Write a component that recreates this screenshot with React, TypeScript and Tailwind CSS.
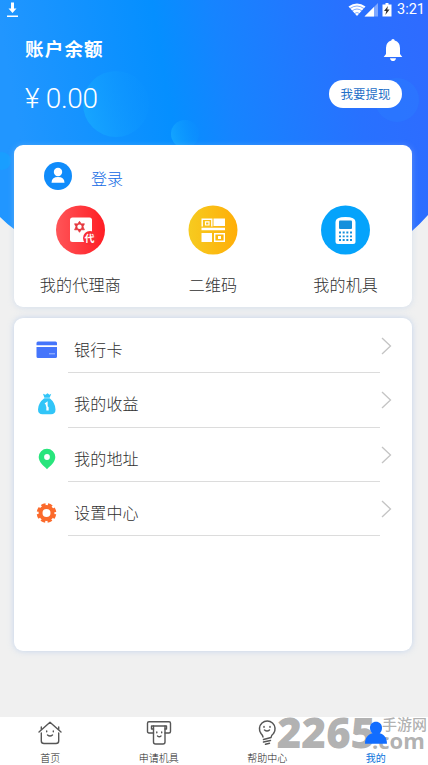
import React from 'react';

const services = [
  { label: '我的代理商', icon: <AgentIcon /> },
  { label: '二维码', icon: <QrIcon /> },
  { label: '我的机具', icon: <TerminalIcon /> },
];

const menuItems = [
  { label: '银行卡', icon: <CardIcon /> },
  { label: '我的收益', icon: <MoneyBagIcon /> },
  { label: '我的地址', icon: <PinIcon /> },
  { label: '设置中心', icon: <GearIcon /> },
];

const tabs = [
  { label: '首页', icon: <HomeIcon />, active: false },
  { label: '申请机具', icon: <ApplyIcon />, active: false },
  { label: '帮助中心', icon: <BulbIcon />, active: false },
  { label: '我的', icon: <MineIcon />, active: true },
];

function HeaderBackdrop() {
  return (
    <svg className="absolute left-0 top-0 h-[260px] w-[428px]" viewBox="0 0 428 260">
      <defs>
        <linearGradient id="sky" x1="0" y1="0.1" x2="1" y2="0">
          <stop offset="0" stopColor="#2196ff" />
          <stop offset="0.36" stopColor="#058fff" />
          <stop offset="0.5" stopColor="#1684ff" />
          <stop offset="0.8" stopColor="#2871ff" />
          <stop offset="1" stopColor="#2f6bff" />
        </linearGradient>
        <linearGradient id="bubble" x1="0" y1="0.6" x2="1" y2="0.3">
          <stop offset="0" stopColor="#17abff" stopOpacity="0.75" />
          <stop offset="1" stopColor="#0c96ff" stopOpacity="0.1" />
        </linearGradient>
      </defs>
      <path d="M0 0H428V215Q420 224 412 231L380 252H40L14 229Q7 224 0 217Z" fill="url(#sky)" />
      <circle cx="116" cy="104" r="33" fill="url(#bubble)" />
      <circle cx="185" cy="134" r="14" fill="url(#bubble)" />
      <circle cx="2" cy="161" r="9" fill="#12a5ff" opacity="0.5" />
      <circle cx="397" cy="100" r="22" fill="#2b80ff" opacity="0.4" />
    </svg>
  );
}

function StatusBar() {
  return (
    <div className="flex h-5 items-center justify-between pl-[6px] pr-[3px] text-white">
      <svg className="h-[16px] w-[13px]" viewBox="0 0 13 16" fill="currentColor">
        <path d="M5 .5h3v6h2.500L6.500 11 2.500 6.500H5zM1 13.500h11V15H1z" />
      </svg>
      <div className="flex items-center">
        <svg className="h-[16px] w-[46px]" viewBox="0 0 46 16" fill="currentColor">
          <path d="M2.500 4.500Q11 -1.500 19.500 4.500L11 14Z" />
          <path d="M4 6.500Q11 1.500 18 6.500M6 9Q11 5 16 9M8.500 11.500Q11 9.500 13.500 11.500" fill="none" stroke="#2b74ff" strokeWidth=".6" />
          <path d="M32 1v13.500H18.500z" opacity=".4" />
          <path d="M28 5v9.500h-9.500z" />
          <path d="M36.500 2.500h3V1h3v1.500h3v12h-9z" />
          <path d="M42 4l-4 5h2.300l-1 4 4.300-5.500H41.200z" fill="#333" />
        </svg>
        <span className="ml-[5px] font-[Roboto] text-[14.500px] leading-5">3:21</span>
      </div>
    </div>
  );
}

function AgentIcon() {
  return (
    <svg className="size-[50px]" viewBox="0 0 50 50">
      <defs>
        <linearGradient id="red">
          <stop offset="0" stopColor="#ff5558" />
          <stop offset="1" stopColor="#ff1d24" />
        </linearGradient>
      </defs>
      <circle cx="25.500" cy="25" r="24.500" fill="url(#red)" />
      <rect x="15" y="12.500" width="22" height="24.500" rx="2.500" fill="#fff" />
      <path d="M24.500 16.300l1.700 2.600 3.200-.1-1.400 3 1.400 3-3.200-.1-1.700 2.600-1.700-2.600-3.200.1 1.400-3-1.400-3 3.200.1z" fill="#e5393f" stroke="#e5393f" strokeWidth=".8" strokeLinejoin="round" />
      <circle cx="24.500" cy="21.800" r="2.200" fill="#fff" />
      <circle cx="35" cy="33" r="7" fill="#f92d34" />
      <text x="34.500" y="36.800" textAnchor="middle" fontSize="10" fontWeight="700" fill="#fff">代</text>
    </svg>
  );
}

function QrIcon() {
  return (
    <svg className="size-[50px]" viewBox="0 0 50 50">
      <defs>
        <linearGradient id="amber">
          <stop offset="0" stopColor="#f6cb20" />
          <stop offset="1" stopColor="#ffae08" />
        </linearGradient>
      </defs>
      <circle cx="25" cy="25" r="24.500" fill="url(#amber)" />
      <path d="M14.200 21.500v-7.300h9.600v7.300M26.700 28.700h9.600v7.600h-9.600z" fill="none" stroke="#fff" strokeWidth="1.400" />
      <path d="M17.500 16.800h3.500v3.200h-3.500z" fill="none" stroke="#fff" strokeWidth="1.200" />
      <path d="M25.500 13.500H37v7.500H25.500zM13.500 22.800H37v2.400H13.500zM13.500 28H24v9H13.500zM30 31h3v3h-3z" fill="#fff" />
    </svg>
  );
}

function TerminalIcon() {
  return (
    <svg className="size-[50px]" viewBox="0 0 50 50">
      <circle cx="24.500" cy="25" r="24.500" fill="#05a3fb" />
      <path d="M14.500 17Q14.500 12 24.500 12T34.500 17V36.500Q34.500 39 32 39H17Q14.500 39 14.500 36.500Z" fill="#fff" />
      <rect x="18" y="15.500" width="13" height="8.500" rx="1" fill="#1590dc" />
      <path d="M18 27.500h13M18 31.300h13M18 35h13" stroke="#1590dc" strokeWidth="1.800" strokeDasharray="2 1.670" />
    </svg>
  );
}

function CardIcon() {
  return (
    <svg className="size-[22px]" viewBox="0 0 22 22">
      <path d="M.5 4Q.5 2.500 2 2.500H19.500Q21 2.500 21 4V6.300H.5zM.5 8H21V17.500Q21 19 19.500 19H2Q.5 19 .5 17.500z" fill="#4575fb" />
      <path d="M13 14.800h6" stroke="#a9bfff" />
    </svg>
  );
}

function MoneyBagIcon() {
  return (
    <svg className="size-[22px]" viewBox="0 0 22 22">
      <path d="M7 .8l2.500 1L11.500.3l2 1.500L15.300.8 13.500 5Q19.500 10 19.500 16.500Q19.500 21.300 15 21.300H6.500Q2 21.300 2 16.500Q2 10 8.500 5Z" fill="#31c5f8" />
      <path d="M8 5h6" stroke="#b3ebff" strokeWidth=".8" />
      <path d="M9 11l2-1.500v8M10.500 9.500v3.500l1.500 1.500v3" fill="none" stroke="#fff" strokeWidth="1.300" />
    </svg>
  );
}

function PinIcon() {
  return (
    <svg className="size-[22px]" viewBox="0 0 22 22">
      <path d="M11 .8a8.300 8.300 0 0 1 8.300 8.300c0 5-4.800 8.900-8.300 12.100C7.500 18 2.700 14.100 2.700 9.100A8.300 8.300 0 0 1 11 .8z" fill="#28e57c" />
      <circle cx="11" cy="9" r="2.900" fill="#fff" />
    </svg>
  );
}

function GearIcon() {
  return (
    <svg className="size-[22px]" viewBox="0 0 22 22" fill="none" stroke="#fb6a2c">
      <circle cx="10.500" cy="11" r="6" strokeWidth="4" />
      <circle cx="10.500" cy="11" r="8.300" strokeWidth="3" strokeDasharray="4.200 2.319" strokeDashoffset="-1.160" />
    </svg>
  );
}

function HomeIcon() {
  return (
    <svg className="size-[26px]" viewBox="0 0 26 26" fill="none" stroke="#565656" strokeWidth="1.400" strokeLinecap="round" strokeLinejoin="round">
      <path d="M2 12L13 2.300l11 9.700M4.300 9.500V7M21.700 9.500V7M4.300 13V21Q4.300 23.500 7 23.500H19Q21.700 23.500 21.700 21V13M9.700 11v.8M16.300 11v.8M10.500 15Q13 17 15.500 15" />
    </svg>
  );
}

function ApplyIcon() {
  return (
    <svg className="size-[26px]" viewBox="0 0 26 26" fill="none" stroke="#565656" strokeWidth="1.400" strokeLinecap="round" strokeLinejoin="round">
      <path d="M7.500 13H3Q1.500 13 1.500 11.500V3.300Q1.500 1.800 3 1.800H23Q24.500 1.800 24.500 3.300V11.500Q24.500 13 23 13H19M7.500 9H5.500V6H20.500V9H19" />
      <path d="M7.500 6V22Q7.500 24 9.500 24H17Q19 24 19 22V6M10.800 12v.8M15.700 12v.8M11.500 16Q13.300 17.500 15 16" />
    </svg>
  );
}

function BulbIcon() {
  return (
    <svg className="size-[26px]" viewBox="0 0 26 26" fill="none" stroke="#565656" strokeWidth="1.500" strokeLinecap="round" strokeLinejoin="round">
      <path d="M9 17Q9 15.500 7 13.500A7.800 7.800 0 1 1 19.500 13.500Q17 15.500 17 17.500L9.500 19.500M9.500 22L16.500 20.500M11.500 24.300l4-1M10 6.500v.8M16 6.500v.8M10.500 10Q13 12 15.500 10" />
    </svg>
  );
}

function MineIcon() {
  return (
    <svg className="size-[26px]" viewBox="0 0 26 26" fill="#126dff">
      <path d="M13 1.800c3.500 0 6 2.500 6 6 0 2.300-.8 4.300-2.300 5.500 4.500 1.300 7.300 4.200 7.300 10.500H2C2 17.500 5 14.600 9.500 13.300 8 12.100 7 10.100 7 7.800c0-3.500 2.500-6 6-6z" />
    </svg>
  );
}

function Watermark() {
  return (
    <div className="pointer-events-none absolute right-0 top-[-2px] flex h-[34px] text-[#858585]/65">
      <span className="-skew-x-2 font-['Open_Sans'] text-[42px] font-extrabold not-italic leading-[34px]">2265</span>
      <div className="-ml-[3px] flex w-[56px] flex-col pt-px">
        <span className="whitespace-nowrap pl-[10px] text-[15px] font-medium leading-[16px]">手游网</span>
        <span className="mt-px font-['Open_Sans'] text-[22px] font-bold leading-[14px]">.com</span>
      </div>
    </div>
  );
}

export default function App() {
  return (
    <div className="relative flex h-[765px] w-[428px] flex-col overflow-hidden bg-[#f0f0f0] font-['Noto_Sans_CJK_SC',sans-serif] text-[#303030]">
      <HeaderBackdrop />
      <header className="relative h-[145px] text-white">
        <StatusBar />
        <div className="flex justify-between pl-[25px] pr-[26px] pt-[14px]">
          <div>
            <h1 className="text-[18.500px] font-bold leading-[28px] tracking-[1.200px]">账户余额</h1>
            <p className="mt-[20px] font-[Roboto] text-[28px] font-light leading-[33px] tracking-[-0.300px]">¥ 0.00</p>
          </div>
          <div className="flex flex-col items-end">
            <svg className="-mr-px mt-[4px] h-[24px] w-[20px]" viewBox="0 0 20 24" fill="currentColor">
              <path d="M8.300 2.500Q8.300 1 10 1t1.700 1.500Q17 4 17 10v6l2.300 3H.7L3 16V10Q3 4 8.300 2.500zM7 20.200h6q-.5 2.800-3 2.800t-3-2.800z" />
            </svg>
            <button className="mt-[18px] h-[28px] w-[73px] rounded-full bg-white text-[12.500px] leading-[28px] text-[#1f70c8]">我要提现</button>
          </div>
        </div>
      </header>

      <section className="relative ml-[14px] mr-[16px] h-[162px] rounded-[9px] bg-white shadow-[0_1px_6px_rgba(175,200,235,0.4)]">
        <div className="flex items-center pl-[30px] pt-[17px]">
          <svg className="size-[28px]" viewBox="0 0 28 28">
            <circle cx="14" cy="14" r="14" fill="#108cfb" />
            <circle cx="14" cy="10" r="4.200" fill="#fff" />
            <path d="M7.500 20.800q0-5.800 6.500-5.800t6.500 5.800z" fill="#fff" />
          </svg>
          <span className="ml-[19px] pt-[5px] text-[16px] font-light leading-[23px] text-[#0f68e4]">登录</span>
        </div>
        <div className="mt-[15px] flex">
          {services.map((item) => (
            <div key={item.label} className="flex flex-1 flex-col items-center">
              {item.icon}
              <span className="mt-[17px] whitespace-nowrap text-[16px] font-light leading-[24px] tracking-[0.200px]">{item.label}</span>
            </div>
          ))}
        </div>
      </section>

      <section className="relative ml-[14px] mr-[16px] mt-[11px] h-[333px] rounded-[9px] bg-white pt-[1px] shadow-[0_0_6px_rgba(175,200,235,0.7)]">
        {menuItems.map((item) => (
          <div key={item.label} className="flex h-[54.300px] pl-[22px]">
            <div className="pt-[20px]">{item.icon}</div>
            <div className="ml-[10px] w-[312px] border-b border-[#dcdcdc] pl-[6px] pt-[18px] text-[16px] font-light leading-[24px] tracking-[0.200px]">
              {item.label}
            </div>
            <svg className="mt-[18px] h-[18px] w-[12px]" viewBox="0 0 12 18" fill="none" stroke="#c4c4c4" strokeWidth="1.300">
              <path d="M2 1l8.500 8L2 17" />
            </svg>
          </div>
        ))}
      </section>

      <nav className="relative mt-auto h-[48px] bg-white">
        <Watermark />
        <div className="relative -ml-[4px] flex w-[434px]">
          {tabs.map((tab) => (
            <div
              key={tab.label}
              className={`flex flex-1 flex-col items-center pt-[3px] text-[10px] leading-[14px] ${tab.active ? 'text-[#0872dc]' : 'font-light text-[#222]'}`}
            >
              {tab.icon}
              <span className="mt-[5px]">{tab.label}</span>
            </div>
          ))}
        </div>
      </nav>
    </div>
  );
}
